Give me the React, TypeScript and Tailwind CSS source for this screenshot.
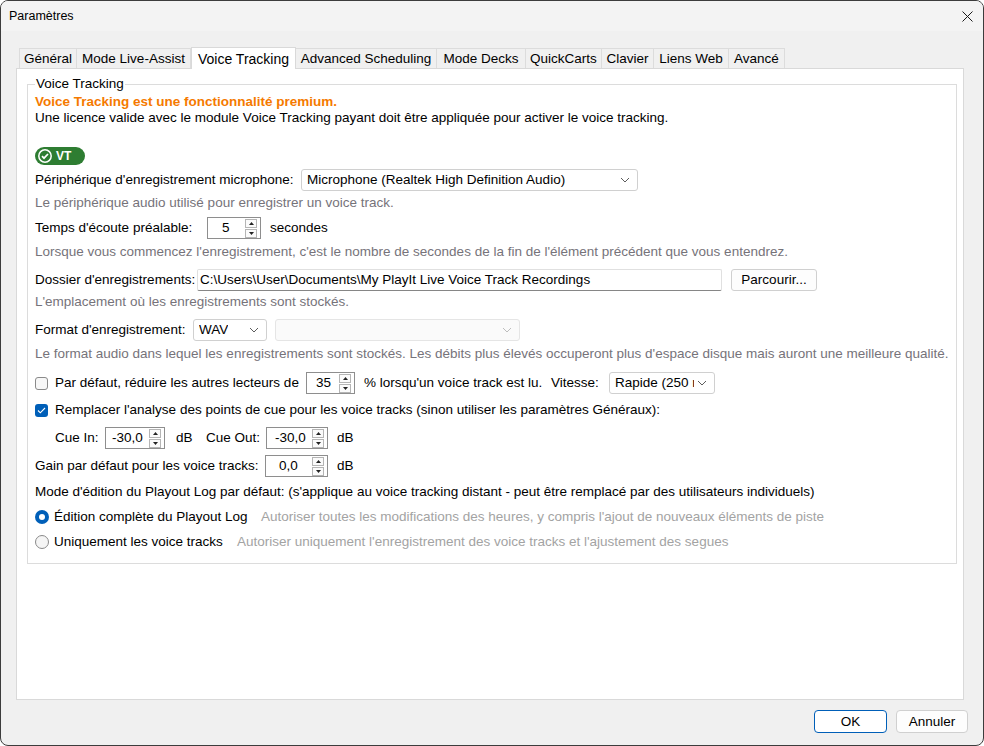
import React from 'react';

const Chevron = ({ color = '#5c5c5c' }: { color?: string }) => (
  <svg width="10" height="6" viewBox="0 0 10 6" fill="none">
    <path d="M1 1l4 4 4-4" stroke={color} strokeWidth="1" />
  </svg>
);

const Select = ({ text, className, disabled }: { text?: string; className: string; disabled?: boolean }) => (
  <div
    className={`flex h-[22px] items-center justify-between overflow-hidden rounded-[3px] border pl-[5px] pr-[7px] ${
      disabled ? 'border-[#e5e5e5] bg-[#fafafa]' : 'border-[#d0d0d0] bg-white'
    } ${className}`}
  >
    <span className="min-w-0 overflow-hidden whitespace-nowrap">{text}</span>
    <span className="ml-[3px] shrink-0">
      <Chevron color={disabled ? '#bdbdbd' : '#5c5c5c'} />
    </span>
  </div>
);

const Arrow = ({ up }: { up?: boolean }) => (
  <div className="flex h-[9px] w-[12px] items-center justify-center border border-[#b5b5b5] bg-[#fbfbfb]">
    <svg width="5" height="3" viewBox="0 0 5 3">
      <path d={up ? 'M0 3L2.5 0L5 3Z' : 'M0 0L2.5 3L5 0Z'} fill="#222" />
    </svg>
  </div>
);

const Spin = ({ value, className, textClass }: { value: string; className: string; textClass: string }) => (
  <div className={`flex h-[22px] items-center border border-[#8e8e8e] bg-white pr-[3px] ${className}`}>
    <span className={`flex-1 ${textClass}`}>{value}</span>
    <div className="flex flex-col gap-[1px]">
      <Arrow up />
      <Arrow />
    </div>
  </div>
);

const Check = ({ checked }: { checked?: boolean }) =>
  checked ? (
    <div className="flex h-[13px] w-[13px] shrink-0 items-center justify-center rounded-[3px] bg-[#005fb8]">
      <svg width="9" height="7" viewBox="0 0 9 7" fill="none">
        <path d="M1 3.5l2.3 2.3L8 1" stroke="white" strokeWidth="1.1" />
      </svg>
    </div>
  ) : (
    <div className="h-[13px] w-[13px] shrink-0 rounded-[3px] border border-[#8a8a8a] bg-[#f7f7f7]" />
  );

const Radio = ({ checked }: { checked?: boolean }) =>
  checked ? (
    <div className="flex h-[14px] w-[14px] shrink-0 items-center justify-center rounded-full bg-[#005fb8]">
      <div className="h-[6px] w-[6px] rounded-full bg-white" />
    </div>
  ) : (
    <div className="h-[14px] w-[14px] shrink-0 rounded-full border border-[#8a8a8a] bg-[#f5f5f5]" />
  );

const tabs = [
  { label: 'Général', w: 'w-[58px]' },
  { label: 'Mode Live-Assist', w: 'w-[115px]' },
  { label: 'Voice Tracking', w: 'w-[105px]', active: true },
  { label: 'Advanced Scheduling', w: 'w-[142px]' },
  { label: 'Mode Decks', w: 'w-[90px]' },
  { label: 'QuickCarts', w: 'w-[77px]' },
  { label: 'Clavier', w: 'w-[53px]' },
  { label: 'Liens Web', w: 'w-[76px]' },
  { label: 'Avancé', w: 'w-[57px]' },
];

export default function App() {
  return (
    <div className="h-[746px] w-[984px] overflow-hidden rounded-[8px] border border-[#3c3c3c] bg-[#f0f0f0] font-['Liberation_Sans',Arial,sans-serif] text-[13.5px] leading-[16px] text-black">
      {/* title bar */}
      <div className="flex h-[30px] items-center justify-between bg-[#f3f3f3] pl-[8px] pr-[10px]">
        <span className="text-[12.5px]">Paramètres</span>
        <svg width="11" height="11" viewBox="0 0 11 11" fill="none">
          <path d="M0.5 0.5l10 10M10.5 0.5l-10 10" stroke="#1a1a1a" strokeWidth="1" />
        </svg>
      </div>

      <div className="flex flex-col pl-[15px] pr-[19px] pt-[16px]">
        {/* tabs */}
        <div className="flex h-[21px] items-end pl-[3px]">
          {tabs.map((t) =>
            t.active ? (
              <div
                key={t.label}
                className={`relative z-10 -mb-px flex h-[22px] shrink-0 items-center justify-center border border-b-0 border-[#d9d9d9] bg-white text-[14px] ${t.w}`}
              >
                {t.label}
              </div>
            ) : (
              <div
                key={t.label}
                className={`-ml-px flex h-[20px] shrink-0 items-center justify-center border border-b-0 border-[#dcdcdc] bg-[#f0f0f0] first:ml-0 ${t.w}`}
              >
                {t.label}
              </div>
            ),
          )}
        </div>

        {/* tab panel */}
        <div className="h-[632px] border border-[#d9d9d9] bg-white pl-[10px] pr-[6px] pt-[8px]">
          <fieldset className="border border-[#dcdcdc] px-[7px] pb-[10px]">
            <legend className="px-[1px] leading-[14px]">Voice Tracking</legend>

            <div className="mt-[3px] flex h-[16px] items-center font-bold text-[#f57a00]">
              Voice Tracking est une fonctionnalité premium.
            </div>
            <div className="flex h-[16px] items-center whitespace-nowrap">
              Une licence valide avec le module Voice Tracking payant doit être appliquée pour activer le voice tracking.
            </div>

            <div className="mt-[21px] flex h-[18px] w-[50px] items-center gap-[4px] rounded-full bg-[#2e7d32] pl-[3px]">
              <svg width="14" height="14" viewBox="0 0 14 14">
                <circle cx="7" cy="7" r="6.2" fill="none" stroke="white" strokeWidth="1.5" />
                <path d="M4 7.2l2 2 4-4.2" fill="none" stroke="white" strokeWidth="1.7" />
              </svg>
              <span className="text-[12px] font-bold text-white">VT</span>
            </div>

            <div className="mt-[3px] flex h-[24px] items-center">
              <span className="w-[266px] shrink-0 whitespace-nowrap">Périphérique d'enregistrement microphone:</span>
              <Select text="Microphone (Realtek High Definition Audio)" className="w-[337px]" />
            </div>
            <div className="flex h-[22px] items-center text-[#76737a]">
              Le périphérique audio utilisé pour enregistrer un voice track.
            </div>

            <div className="mt-[2px] flex h-[24px] items-center">
              <span className="w-[172px] shrink-0 whitespace-nowrap">Temps d'écoute préalable:</span>
              <Spin value="5" className="w-[54px]" textClass="pl-[14px]" />
              <span className="ml-[9px]">secondes</span>
            </div>
            <div className="mt-[1px] flex h-[22px] items-center whitespace-nowrap text-[#76737a]">
              Lorsque vous commencez l'enregistrement, c'est le nombre de secondes de la fin de l'élément précédent que vous entendrez.
            </div>

            <div className="mt-[6px] flex h-[22px] items-center">
              <span className="w-[162px] shrink-0 whitespace-nowrap">Dossier d'enregistrements:</span>
              <div className="flex h-[22px] w-[525px] items-center rounded-[2px] border border-[#e0e0e0] border-b-[#868686] bg-white pl-[2px] whitespace-nowrap">
                C:\Users\User\Documents\My PlayIt Live Voice Track Recordings
              </div>
              <div className="ml-[9px] flex h-[22px] w-[86px] items-center justify-center rounded-[3px] border border-[#d0d0d0] bg-[#fdfdfd]">
                Parcourir...
              </div>
            </div>
            <div className="flex h-[22px] items-center text-[#76737a]">
              L'emplacement où les enregistrements sont stockés.
            </div>

            <div className="mt-[6px] flex h-[22px] items-center">
              <span className="w-[158px] shrink-0 whitespace-nowrap">Format d'enregistrement:</span>
              <Select text="WAV" className="w-[74px]" />
              <Select text="" className="ml-[8px] w-[245px]" disabled />
            </div>
            <div className="mt-[2px] flex h-[22px] items-center whitespace-nowrap text-[#76737a]">
              Le format audio dans lequel les enregistrements sont stockés. Les débits plus élevés occuperont plus d'espace disque mais auront une meilleure qualité.
            </div>

            <div className="mt-[7px] flex h-[22px] items-center">
              <Check />
              <span className="ml-[7px] w-[251px] shrink-0 whitespace-nowrap">Par défaut, réduire les autres lecteurs de</span>
              <Spin value="35" className="w-[49px]" textClass="pl-[9px]" />
              <span className="ml-[9px] w-[187px] shrink-0 whitespace-nowrap">% lorsqu'un voice track est lu.</span>
              <span className="w-[58px] shrink-0">Vitesse:</span>
              <Select text="Rapide (250 ms)" className="w-[106px]" />
            </div>

            <div className="mt-[5px] flex h-[22px] items-center">
              <Check checked />
              <span className="ml-[7px] whitespace-nowrap">
                Remplacer l'analyse des points de cue pour les voice tracks (sinon utiliser les paramètres Généraux):
              </span>
            </div>

            <div className="mt-[6px] flex h-[22px] items-center pl-[20px]">
              <span className="w-[50px] shrink-0">Cue In:</span>
              <Spin value="-30,0" className="w-[60px]" textClass="pl-[6px]" />
              <span className="ml-[11px] w-[30px] shrink-0">dB</span>
              <span className="w-[60px] shrink-0">Cue Out:</span>
              <Spin value="-30,0" className="w-[62px]" textClass="pl-[8px]" />
              <span className="ml-[9px]">dB</span>
            </div>

            <div className="mt-[6px] flex h-[22px] items-center">
              <span className="w-[230px] shrink-0 whitespace-nowrap">Gain par défaut pour les voice tracks:</span>
              <Spin value="0,0" className="w-[63px]" textClass="pl-[13px]" />
              <span className="ml-[9px]">dB</span>
            </div>

            <div className="mt-[4px] flex h-[22px] items-center whitespace-nowrap">
              Mode d'édition du Playout Log par défaut: (s'applique au voice tracking distant - peut être remplacé par des utilisateurs individuels)
            </div>

            <div className="mt-[3px] flex h-[22px] items-center">
              <Radio checked />
              <span className="ml-[5px] w-[207px] shrink-0 whitespace-nowrap">Édition complète du Playout Log</span>
              <span className="whitespace-nowrap text-[#a3a3a3]">
                Autoriser toutes les modifications des heures, y compris l'ajout de nouveaux éléments de piste
              </span>
            </div>
            <div className="mt-[3px] flex h-[22px] items-center">
              <Radio />
              <span className="ml-[5px] w-[183px] shrink-0 whitespace-nowrap">Uniquement les voice tracks</span>
              <span className="whitespace-nowrap text-[#a3a3a3]">
                Autoriser uniquement l'enregistrement des voice tracks et l'ajustement des segues
              </span>
            </div>
          </fieldset>
        </div>

        {/* buttons */}
        <div className="mt-[10px] flex justify-end gap-[9px]">
          <div className="flex h-[23px] w-[73px] items-center justify-center rounded-[4px] border border-[#005fb8] bg-white">OK</div>
          <div className="-mr-[4px] flex h-[23px] w-[72px] items-center justify-center rounded-[4px] border border-[#d0d0d0] bg-[#fdfdfd]">
            Annuler
          </div>
        </div>
      </div>
    </div>
  );
}
